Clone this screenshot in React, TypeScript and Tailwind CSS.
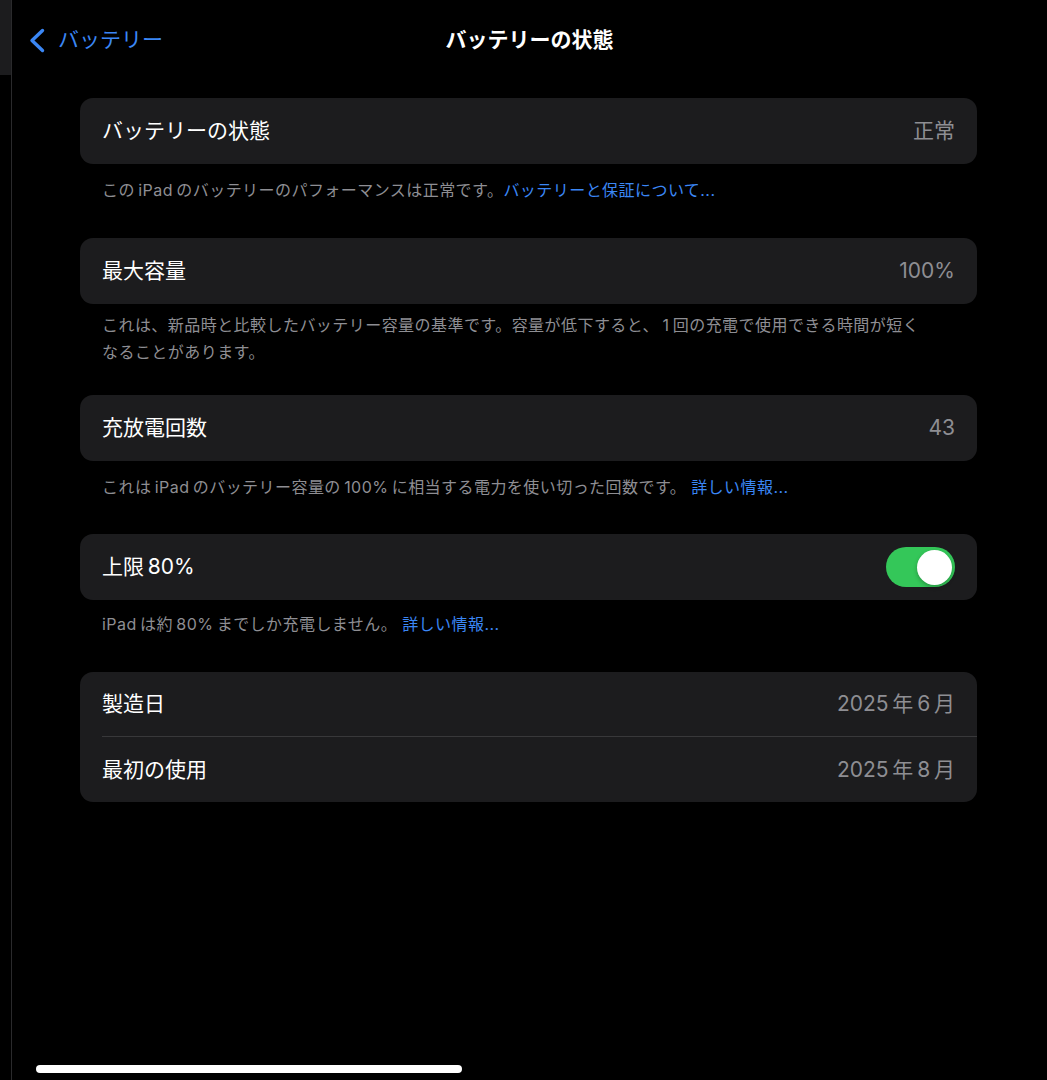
import React from "react";

const FONT = 'Inter, "Noto Sans CJK JP", "Noto Sans", sans-serif';
const T = "\u2009";

function Row({ label, value, children, h = "h-[66px]" }: { label: string; value?: string; children?: React.ReactNode; h?: string }) {
  return (
    <div className={`flex ${h} items-center justify-between pl-[22px] pr-[22px]`}>
      <span className="text-[21px] text-white">{label}</span>
      {value !== undefined ? <span className="text-[21px] text-[#8e8e93]">{value}</span> : children}
    </div>
  );
}

function Card({ children }: { children: React.ReactNode }) {
  return <div className="overflow-hidden rounded-[13px] bg-[#1c1c1e]">{children}</div>;
}

function Link({ children }: { children: React.ReactNode }) {
  return <span className="text-[#3b87f5]">{children}</span>;
}

export default function App() {
  return (
    <div className="relative flex h-[1080px] w-full overflow-hidden bg-black" style={{ fontFamily: FONT }}>
      {/* left split pane sliver */}
      <div className="flex w-[12px] shrink-0 flex-col border-r border-[#2a2a2c]">
        <div className="h-[75px] bg-[#1c1c1e]" />
      </div>

      <div className="flex min-w-0 flex-1 flex-col">
        {/* header */}
        <div className="grid h-[80px] grid-cols-[1fr_auto_1fr] items-center">
          <div className="flex items-center pl-[16px]">
            <svg width="18" height="25" viewBox="0 0 18 25" fill="none">
              <path d="M14.5 2.5 L4 12.5 L14.5 22.5" stroke="#3b87f5" strokeWidth="3.4" strokeLinecap="round" strokeLinejoin="round" />
            </svg>
            <span className="ml-[12px] text-[21px] text-[#3b87f5]">バッテリー</span>
          </div>
          <div className="text-[21px] font-semibold text-white">バッテリーの状態</div>
          <div />
        </div>

        {/* content */}
        <div className="flex flex-col pl-[68px] pr-[70px] pt-[18px]">
          <Card>
            <Row label="バッテリーの状態" value="正常" />
          </Card>
          <p className="mb-[35px] pl-[22px] pt-[13px] text-[16px] leading-[26px] tracking-[0.45px] text-[#8e8e93]">
            {`この${T}iPad${T}のバッテリーのパフォーマンスは正常です。`}
            <Link>バッテリーと保証について...</Link>
          </p>

          <Card>
            <Row label="最大容量" value="100%" />
          </Card>
          <p className="mb-[29px] pl-[22px] pt-[8px] text-[16px] leading-[27px] tracking-[0.45px] text-[#8e8e93]">
            {`これは、新品時と比較したバッテリー容量の基準です。容量が低下すると、${T}1${T}回の充電で使用できる時間が短く`}
            <br />
            なることがあります。
          </p>

          <Card>
            <Row label="充放電回数" value="43" />
          </Card>
          <p className="mb-[34px] pl-[22px] pt-[13px] text-[16px] leading-[26px] tracking-[0.45px] text-[#8e8e93]">
            {`これは${T}iPad${T}のバッテリー容量の${T}100%${T}に相当する電力を使い切った回数です。 `}
            <Link>詳しい情報...</Link>
          </p>

          <Card>
            <Row label={`上限${T}80%`}>
              <div className="flex h-[40px] w-[69px] items-center justify-end rounded-full bg-[#34c759] px-[3px]">
                <div className="h-[35px] w-[35px] rounded-full bg-white shadow-[0_2px_4px_rgba(0,0,0,0.25)]" />
              </div>
            </Row>
          </Card>
          <p className="mb-[35px] pl-[22px] pt-[11px] text-[16px] leading-[26px] tracking-[0.45px] text-[#8e8e93]">
            {`iPad${T}は約${T}80%${T}までしか充電しません。 `}
            <Link>詳しい情報...</Link>
          </p>

          <Card>
            <Row label="製造日" value={`2025${T}年${T}6${T}月`} h="h-[64px]" />
            <div className="ml-[22px] h-px bg-[#38383a]" />
            <Row label="最初の使用" value={`2025${T}年${T}8${T}月`} h="h-[65px]" />
          </Card>
        </div>
      </div>

      {/* home indicator */}
      <div className="absolute left-[36px] top-[1065px] h-[8px] w-[426px] rounded-full bg-white" />
    </div>
  );
}
